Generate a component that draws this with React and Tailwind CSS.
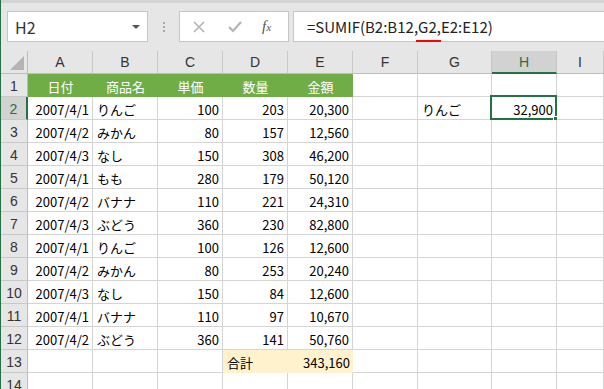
// ── データ ───────────────────────────────────

const columns = ['A', 'B', 'C', 'D', 'E', 'F', 'G', 'H', 'I'];

const rows = [
  ['2007/4/1', 'りんご', '100', '203', '20,300'],
  ['2007/4/2', 'みかん', '80', '157', '12,560'],
  ['2007/4/3', 'なし', '150', '308', '46,200'],
  ['2007/4/1', 'もも', '280', '179', '50,120'],
  ['2007/4/2', 'バナナ', '110', '221', '24,310'],
  ['2007/4/3', 'ぶどう', '360', '230', '82,800'],
  ['2007/4/1', 'りんご', '100', '126', '12,600'],
  ['2007/4/2', 'みかん', '80', '253', '20,240'],
  ['2007/4/3', 'なし', '150', '84', '12,600'],
  ['2007/4/1', 'バナナ', '110', '97', '10,670'],
  ['2007/4/2', 'ぶどう', '360', '141', '50,760'],
];

const headers = ['日付', '商品名', '単価', '数量', '金額'];

const font = "font-['Noto_Sans_CJK_JP',sans-serif]";

// ── 数式バー ─────────────────────────────────

function FormulaBar() {
  return (
    <div className="h-[51px] bg-[#e6e6e6] border-t-[3px] border-[#d4d4d4] flex items-start pt-[8px] pl-[6px]">
      <div className="w-[141px] h-[31px] bg-white border border-[#c6c6c6] flex items-center justify-between pl-[7px] pr-[5px]">
        <span className={`${font} text-[16px] text-[#333] leading-none`}>H2</span>
        <span className="w-0 h-0 border-l-[4px] border-r-[4px] border-t-[4px] border-l-transparent border-r-transparent border-t-[#555] mr-[2px]" />
      </div>
      <div className="w-[31px] h-[31px] flex flex-col items-center justify-center gap-[2px]">
        <span className="w-[2px] h-[2px] bg-[#a8a8a8]" />
        <span className="w-[2px] h-[2px] bg-[#a8a8a8]" />
        <span className="w-[2px] h-[2px] bg-[#a8a8a8]" />
      </div>
      <div className="w-[110px] h-[31px] bg-white border border-[#c6c6c6] flex items-center">
        <svg width="14" height="12" viewBox="0 0 14 12" className="ml-[12px]">
          <path d="M2 1 L12 11 M12 1 L2 11" stroke="#b4b4b4" strokeWidth="1.6" fill="none" />
        </svg>
        <svg width="14" height="12" viewBox="0 0 14 12" className="ml-[22px]">
          <path d="M1 6 L5 10 L13 1" stroke="#b4b4b4" strokeWidth="2.2" fill="none" />
        </svg>
        <span className="ml-[20px] font-['Liberation_Serif',serif] italic text-[15px] text-[#555] leading-none">
          f<span className="text-[11px]">x</span>
        </span>
      </div>
      <div className="flex-1 h-[31px] bg-white border border-r-0 border-[#c6c6c6] ml-[4px] flex items-center pl-[13px]">
        <span className={`${font} text-[15px] text-[#222] leading-none`}>
          =SUMIF(B2:B12<span className="relative">,G2,<span className="absolute left-[2px] right-[0px] -bottom-[5px] h-[2px] bg-[#ff0000]" /></span>E2:E12)
        </span>
      </div>
    </div>
  );
}

// ── セル ─────────────────────────────────────

function Cell({ children, align = 'left', fill, selected }) {
  const justify = align === 'right' ? 'justify-end pr-[3px]' : align === 'center' ? 'justify-center' : 'justify-start pl-[4px]';
  const border = fill ? '' : 'border-r border-b border-[#d4d4d4]';
  return (
    <div
      className={`relative h-[23px] flex items-center pt-[2px] ${justify} ${border} ${fill || 'bg-white'} ${font} text-[13px] leading-none text-black whitespace-nowrap`}
    >
      {children}
      {selected && (
        <>
          <span className="absolute -left-[2px] -top-[2px] right-[-1px] bottom-[-1px] border-2 border-[#217346] pointer-events-none" />
          <span className="absolute right-[-3px] bottom-[-3px] w-[6px] h-[6px] bg-[#217346] border border-white pointer-events-none" />
        </>
      )}
    </div>
  );
}

function RowHeader({ n, active }) {
  return (
    <div
      className={`h-[23px] flex items-center justify-center pt-[1px] border-b border-[#c8c8c8] ${
        active ? 'bg-[#d2d2d2] border-r-2 border-r-[#217346] text-[#217346]' : 'bg-[#e6e6e6] border-r border-r-[#bdbdbd] text-[#333]'
      } font-['Liberation_Sans',sans-serif] text-[14px] leading-none`}
    >
      {n}
    </div>
  );
}

// ── シート ───────────────────────────────────

function Row({ n, r }) {
  const first = n === 2;
  return (
    <>
      <RowHeader n={n} active={first} />
      <Cell align="right">{r[0]}</Cell>
      <Cell>{r[1]}</Cell>
      <Cell align="right">{r[2]}</Cell>
      <Cell align="right">{r[3]}</Cell>
      <Cell align="right">{r[4]}</Cell>
      <Cell />
      <Cell>{first ? 'りんご' : null}</Cell>
      <Cell align="right" selected={first}>{first ? '32,900' : null}</Cell>
      <Cell />
    </>
  );
}

function Sheet() {
  const green = 'bg-[#70ad47] text-white';
  const yellow = 'bg-[#fff2cc]';

  return (
    <div className="grid grid-cols-[27px_65px_65px_65px_65px_65px_65px_74px_65px_1fr]">
      {/* 列見出し */}
      <div className="h-[23px] bg-[#e6e6e6] border-r border-b border-[#bdbdbd] flex items-end justify-end pr-[3px] pb-[3px]">
        <span className="w-0 h-0 border-b-[14px] border-l-[14px] border-b-[#b4b4b4] border-l-transparent" />
      </div>
      {columns.map((c) => (
        <div
          key={c}
          className={`h-[23px] flex items-center justify-center border-r border-[#c8c8c8] ${
            c === 'H' ? 'bg-[#d2d2d2] border-b-2 border-b-[#217346] text-[#217346]' : 'bg-[#e6e6e6] border-b border-b-[#bdbdbd] text-[#333]'
          } font-['Liberation_Sans',sans-serif] text-[14px] leading-none`}
        >
          {c}
        </div>
      ))}

      {/* 1行目 */}
      <RowHeader n={1} />
      {headers.map((h) => (
        <Cell key={h} align="center" fill={green}>{h}</Cell>
      ))}
      <Cell /><Cell /><Cell /><Cell />

      {/* データ */}
      {rows.map((r, i) => (
        <Row key={i} n={i + 2} r={r} />
      ))}

      {/* 13行目 */}
      <RowHeader n={13} />
      <Cell /><Cell /><Cell />
      <Cell fill={yellow}>合計</Cell>
      <Cell align="right" fill={yellow}>343,160</Cell>
      <Cell /><Cell /><Cell /><Cell />

      {/* 14行目（下端で切れる） */}
      <RowHeader n={14} />
      <Cell /><Cell /><Cell /><Cell /><Cell /><Cell /><Cell /><Cell /><Cell />
    </div>
  );
}

// ── メイン ───────────────────────────────────

export default function App() {
  return (
    <div className="w-[604px] h-[389px] overflow-hidden bg-white border-l border-[#217346]">
      <FormulaBar />
      <Sheet />
    </div>
  );
}
